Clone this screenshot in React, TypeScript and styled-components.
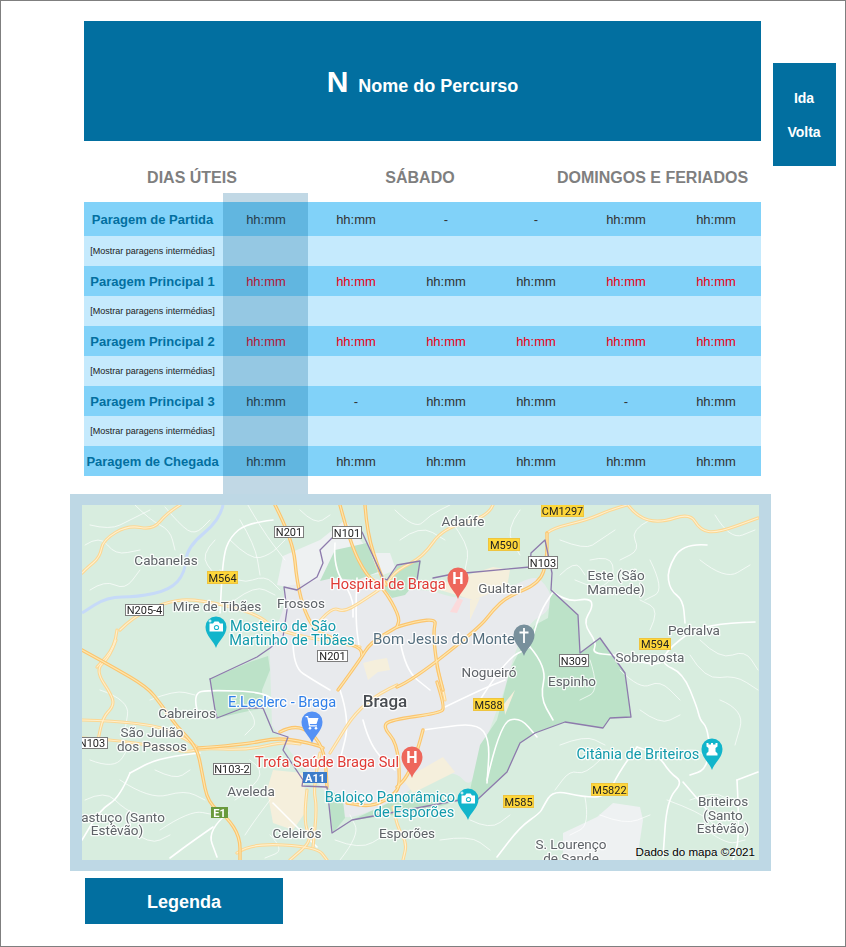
import React from "react";
import styled, { createGlobalStyle } from "styled-components";

const GlobalStyle = createGlobalStyle`
  html, body { margin: 0; padding: 0; background: #fff; }
  body { font-family: "Liberation Sans", Arial, sans-serif; }
`;

const Page = styled.div`
  position: relative;
  box-sizing: border-box;
  width: 846px;
  height: 947px;
  border: 1px solid #7f7f7f;
  padding: 20px 0 0 69px;
  overflow: hidden;
`;
const TopGrid = styled.div`
  display: grid;
  grid-template-columns: 677px 63px;
  grid-template-rows: 120px 61px auto;
  column-gap: 12px;
  margin-left: 14px;
`;
const TitleBar = styled.header`
  background: #026fa0;
  color: #fff;
  display: flex;
  align-items: center;
  justify-content: center;
  gap: 10px;
  font-weight: 700;
  padding: 2px 0 0;
`;
const RouteCode = styled.span`
  font-size: 30px;
  line-height: 34px;
`;
const RouteName = styled.span`
  font-size: 18px;
  line-height: 22px;
  margin-top: 7px;
`;
const DirectionBox = styled.nav`
  grid-column: 2;
  grid-row: 1 / span 3;
  align-self: start;
  margin-top: 42px;
  height: 103px;
  box-sizing: border-box;
  padding-top: 27px;
  padding-right: 1px;
  background: #026fa0;
  color: #fff;
  font-size: 14px;
  font-weight: 700;
  line-height: 16px;
  text-align: center;
  display: flex;
  flex-direction: column;
  gap: 18px;
`;
const DayHeads = styled.div`
  grid-column: 1;
  display: grid;
  grid-template-columns: 216px 240px 225px;
  padding-top: 28px;
  box-sizing: border-box;
`;
const DayHead = styled.h2`
  margin: 0;
  font-size: 16px;
  line-height: 18px;
  font-weight: 700;
  color: #7f7f7f;
  text-align: center;
  white-space: nowrap;
`;
const TimeTable = styled.div`
  grid-column: 1;
  display: flex;
  flex-direction: column;
`;
const MainRow = styled.div<{ $tall?: boolean }>`
  display: grid;
  grid-template-columns: 137px repeat(6, 90px);
  height: ${(p) => (p.$tall ? 34 : 30)}px;
  align-items: center;
  background: #81d2f9;
`;
const SubRow = styled.div`
  height: 30px;
  width: 677px;
  background: #c5eafd;
  display: grid;
  grid-template-columns: 137px 1fr;
  align-items: center;
`;
const StopName = styled.div`
  font-size: 13px;
  font-weight: 700;
  color: #026fa0;
  text-align: center;
  white-space: nowrap;
`;
const ShowStops = styled.div`
  font-size: 9px;
  color: #222;
  text-align: center;
  white-space: nowrap;
`;
const TimeCell = styled.div<{ $red?: boolean }>`
  font-size: 13px;
  color: ${(p) => (p.$red ? "#e80012" : "#333")};
  text-align: center;
`;
const ColumnHighlight = styled.div`
  position: absolute;
  left: 222px;
  top: 192px;
  width: 85px;
  height: 301px;
  background: rgba(0, 96, 149, 0.245);
  pointer-events: none;
`;
const MapFrame = styled.section`
  position: relative;
  box-sizing: border-box;
  width: 701px;
  height: 377px;
  margin-top: 18px;
  padding: 11px 12px;
  background: #bed8e5;
`;
const MapClip = styled.div`
  width: 677px;
  height: 355px;
  overflow: hidden;
`;
const MapSvg = styled.svg`
  display: block;
  width: 677px;
  height: 355px;
  background: #d8eddf;
  filter: blur(0.35px);
`;
const MapCredit = styled.span`
  position: absolute;
  right: 16px;
  bottom: 13px;
  font-size: 11.6px;
  line-height: 13px;
  color: #000;
  white-space: nowrap;
  text-shadow: 0 0 2px #fff;
`;
const LegendButton = styled.button`
  display: block;
  width: 198px;
  height: 46px;
  margin: 7px 0 0 15px;
  padding: 2px 0 0;
  border: 0;
  background: #026fa0;
  color: #fff;
  font-family: inherit;
  font-size: 18px;
  font-weight: 700;
  text-align: center;
`;

const toneColors: Record<string, string> = {
  place: "#5f6368",
  red: "#df3a35",
  teal: "#129aab",
  blue: "#2f7fe8",
  slate: "#56707f",
  city: "#494d52",
};
const toneSizes: Record<string, number> = {
  place: 13.5,
  red: 14.6,
  teal: 14.6,
  blue: 14.6,
  slate: 15,
  city: 17,
};
const Label = styled.text<{ $tone: string }>`
  font-family: Roboto, "Liberation Sans", sans-serif;
  font-size: ${(p) => toneSizes[p.$tone]}px;
  font-weight: ${(p) => (p.$tone === "city" ? 500 : 400)};
  fill: ${(p) => toneColors[p.$tone]};
  stroke: #fff;
  stroke-width: 2.6px;
  stroke-opacity: 0.85;
  paint-order: stroke;
  stroke-linejoin: round;
`;
const SignText = styled.text<{ $light?: boolean }>`
  font-family: Roboto, "Liberation Sans", sans-serif;
  font-size: 11px;
  font-weight: ${(p) => (p.$light ? 700 : 400)};
  fill: ${(p) => (p.$light ? "#fff" : "#222")};
  text-anchor: middle;
`;
const PinLetter = styled.text`
  font-family: Roboto, "Liberation Sans", sans-serif;
  font-size: 16px;
  font-weight: 700;
  fill: #fff;
  text-anchor: middle;
`;

type Pt = [number, number];

function smooth(pts: Pt[]): string {
  let d = `M${pts[0][0]} ${pts[0][1]}`;
  for (let i = 1; i < pts.length - 1; i++) {
    const mx = (pts[i][0] + pts[i + 1][0]) / 2;
    const my = (pts[i][1] + pts[i + 1][1]) / 2;
    d += ` Q${pts[i][0]} ${pts[i][1]} ${mx} ${my}`;
  }
  const last = pts[pts.length - 1];
  return d + ` L${last[0]} ${last[1]}`;
}
const poly = (pts: Pt[]) => pts.map((p) => p.join(",")).join(" ");

const city: Pt[] = [[270,660],[268,640],[285,610],[283,585],[300,585],[335,575],[345,570],[383,580],[400,590],[430,590],[460,600],[505,590],[535,575],[546,585],[552,598],[548,612],[530,622],[515,650],[505,690],[485,740],[472,790],[455,770],[425,780],[395,800],[350,820],[335,812],[325,790],[305,770],[285,745],[272,725]];
const paleGrey: Pt[][] = [
  [[277,585],[283,556],[320,540],[345,520],[385,572],[350,580],[300,590]],
  [[368,553],[390,553],[396,570],[380,576]],
  [[563,833],[597,817],[613,803],[640,807],[643,820],[637,860],[563,860]],
  [[543,630],[567,632],[570,638],[553,641]],
];
const forest: Pt[][] = [
  [[210,679],[250,662],[268,656],[270,670],[262,690],[263,708],[217,718],[215,710]],
  [[551,590],[578,615],[580,653],[600,638],[625,673],[631,717],[610,718],[603,728],[565,722],[535,733],[520,743],[507,772],[477,800],[470,790],[480,745],[497,720],[510,670],[525,640],[535,625],[548,618]],
  [[384,588],[397,566],[421,561],[418,580],[405,595],[392,598]],
  [[335,550],[367,543],[378,572],[357,580],[333,578],[320,581]],
  [[352,820],[410,793],[462,800],[420,812],[395,815]],
  [[327,787],[343,800],[345,818],[333,833]],
];
const beige: Pt[][] = [
  [[430,587],[493,567],[510,570],[507,587],[473,600],[450,593]],
  [[267,790],[273,770],[303,773],[307,810],[293,830],[273,823]],
  [[363,663],[375,660],[387,658],[390,670],[378,672],[368,680]],
  [[403,780],[443,757],[455,772],[413,793]],
  [[504,704],[515,690],[505,715]],
  [[470,600],[480,598],[470,620]],
];
const arterial: Pt[][] = [
  [[340,505],[350,543],[367,577],[383,587],[400,617],[397,627]],
  [[275,505],[293,540],[297,583],[305,613],[317,633],[360,647],[362,655]],
  [[365,505],[367,533],[380,573],[386,585]],
  [[397,627],[437,615],[433,633],[437,667],[443,690]],
  [[338,690],[360,660],[370,643],[397,627]],
  [[397,687],[413,680],[480,627],[493,610],[507,597],[540,583],[547,560],[547,533]],
  [[198,748],[243,745],[280,737],[317,745],[323,748]],
  [[280,732],[293,725],[313,733],[325,753],[327,787]],
  [[82,650],[113,667],[147,687],[160,703],[177,727],[197,747],[202,773],[208,803],[227,817],[240,837],[240,860]],
  [[437,682],[445,707],[440,713],[390,720],[383,727],[397,743],[400,780],[397,793],[373,807],[347,803]],
  [[423,730],[417,753],[407,777],[397,787]],
];
const minorRoads: Pt[][] = [
  [[547,533],[553,528],[587,520],[610,510],[627,505]],
  [[628,505],[637,517],[660,523],[690,513],[700,530],[717,533],[758,518]],
  [[493,505],[488,517],[443,528],[423,557],[397,570],[387,583]],
  [[180,505],[167,513],[153,530],[128,525],[103,540],[100,557],[87,568],[82,573]],
  [[120,630],[133,617],[163,603],[193,598],[257,613],[277,632],[360,647]],
  [[117,630],[115,647],[97,667]],
  [[383,587],[360,603],[343,612],[333,607],[313,628]],
  [[116,640],[110,657],[95,670],[113,697],[113,707],[103,717],[98,740]],
  [[82,720],[147,722],[183,737],[197,747]],
  [[82,738],[123,740],[187,753],[200,748],[247,750],[283,742],[300,744]],
  [[237,853],[250,843],[317,847],[327,860]],
  [[307,790],[303,823],[313,840],[290,860]],
  [[320,753],[313,787],[317,807],[313,847]],
  [[397,685],[363,700],[330,753]],
  [[393,807],[397,827],[407,843],[403,860]],
  [[437,667],[443,690],[445,700]],
];
const whiteRoads: Pt[][] = [
  [[273,520],[247,523],[230,537],[223,557],[220,613]],
  [[755,622],[703,623],[670,647],[660,663],[683,673],[697,707],[700,720],[707,727],[710,750],[705,770],[690,775]],
  [[707,545],[683,543],[667,570],[670,590],[683,600],[685,623]],
  [[553,592],[567,602],[590,598],[593,607],[583,623],[597,643],[592,653],[613,655]],
  [[613,655],[650,665],[660,663]],
  [[637,747],[620,770],[607,797],[583,797],[553,790],[543,807],[540,813],[520,827],[497,857]],
  [[637,747],[657,753],[670,773],[683,782],[667,800],[663,857]],
  [[683,782],[707,810]],
  [[737,780],[758,772]],
  [[737,780],[740,837],[733,860]],
  [[423,730],[437,728],[477,723],[490,740],[487,783]],
  [[363,720],[370,747],[395,770]],
  [[357,578],[355,617],[360,653]],
  [[293,640],[293,667],[313,680],[330,690]],
  [[335,543],[333,567],[353,597],[353,617]],
  [[530,647],[547,667],[540,697],[553,720]],
  [[487,780],[500,723],[520,717],[537,737]],
  [[130,773],[120,797],[100,810],[82,840]],
  [[200,753],[160,757],[130,773]],
  [[213,827],[190,843],[170,858]],
  [[228,813],[207,830],[217,857]],
  [[197,710],[193,693],[210,690],[263,692],[277,703]],
  [[273,803],[300,830],[317,847]],
  [[516,640],[530,647],[540,612],[553,592]],
  [[340,690],[350,720],[340,760]],
  [[400,640],[405,670],[430,690]],
  [[445,707],[480,690],[505,680]],
  [[480,700],[505,660],[530,647]],
];
const thinRoads: Pt[][] = [
  [[90,525],[110,530],[130,520],[150,510]],
  [[135,505],[150,520],[170,530],[175,550]],
  [[230,540],[250,560],[270,555],[285,540]],
  [[220,570],[240,585],[265,575],[280,590]],
  [[240,520],[255,545],[260,575]],
  [[90,590],[105,580],[125,590],[140,570]],
  [[590,560],[610,555],[615,575],[600,590],[575,580]],
  [[650,520],[630,530],[640,550],[620,560]],
  [[700,640],[720,660],[745,650],[758,670]],
  [[650,630],[660,610],[640,600]],
  [[600,760],[585,775],[570,770],[555,790]],
  [[585,797],[590,825],[570,835]],
  [[660,760],[690,745],[710,760]],
  [[667,800],[700,812],[720,830]],
  [[150,700],[175,690],[195,695]],
  [[120,780],[150,800],[185,790],[205,800]],
  [[160,830],[190,810],[215,815]],
  [[100,690],[130,700],[125,730]],
  [[250,760],[265,770],[250,790],[235,800]],
  [[270,800],[255,820],[245,835]],
  [[470,820],[490,830],[510,815]],
  [[620,670],[640,690],[660,680],[680,700]],
  [[590,660],[600,690],[580,700]],
  [[440,840],[470,835],[490,850]],
  [[450,520],[470,545],[465,570]],
  [[520,510],[505,530],[520,555]],
  [[85,545],[100,535],[115,555],[140,550]],
  [[165,507],[180,525],[195,535],[210,520]],
  [[245,500],[262,530],[285,560]],
  [[215,540],[200,555],[215,575]],
  [[235,600],[255,585],[275,595]],
  [[300,510],[315,525],[330,515]],
  [[395,510],[415,530],[430,515],[450,505]],
  [[400,540],[420,525],[445,540]],
  [[560,540],[585,550],[600,540],[615,530]],
  [[560,575],[575,560],[585,575]],
  [[650,560],[665,590],[645,600]],
  [[700,560],[725,580],[750,565]],
  [[715,515],[730,540],[755,530]],
  [[690,655],[705,680],[735,675],[758,690]],
  [[720,700],[745,710],[735,745]],
  [[560,745],[585,735],[605,745]],
  [[640,710],[660,725],[680,715]],
  [[600,815],[625,825],[650,815]],
  [[690,800],[715,790],[735,805]],
  [[700,825],[725,845],[745,840]],
  [[90,760],[115,770],[130,745]],
  [[85,800],[105,790],[125,810],[150,820]],
  [[155,770],[175,780],[190,770]],
  [[130,830],[150,845],[170,835]],
  [[240,700],[260,720],[245,735]],
  [[270,835],[285,850],[265,858]],
  [[335,840],[360,850],[385,835]],
  [[340,860],[360,835],[350,815]],
];
const border: Pt[] = [[210,679],[257,657],[270,648],[283,637],[287,610],[284,587],[297,590],[317,577],[323,563],[320,550],[332,538],[362,532],[383,578],[387,580],[397,565],[420,561],[417,580]];
const border2: Pt[] = [[433,578],[448,575],[465,573],[530,567],[531,553],[545,540],[552,573],[551,590],[578,615],[580,653],[600,638],[625,673],[631,717],[610,718],[603,728],[565,722],[535,733],[520,743],[507,772],[477,800],[460,800],[352,820],[332,833],[327,787],[302,786],[303,780],[283,750],[288,737],[273,732],[263,708],[243,708],[217,718],[215,710],[210,679]];

const whiteSigns: [string, number, number, number, number][] = [
  ["N201", 274, 526, 29, 11],
  ["N101", 332, 526, 29, 12],
  ["N205-4", 125, 604, 38, 11],
  ["N201", 317, 650, 30, 11],
  ["N103", 528, 556, 29, 12],
  ["N309", 559, 654, 29, 12],
  ["N103", 76, 737, 31, 11],
  ["N103-2", 213, 763, 37, 11],
];
const yellowSigns: [string, number, number, number, number][] = [
  ["M564", 207, 571, 30, 12],
  ["CM1297", 541, 504, 42, 12],
  ["M590", 488, 538, 31, 12],
  ["M594", 639, 638, 31, 11],
  ["M588", 473, 698, 30, 12],
  ["M585", 503, 795, 30, 12],
  ["M5822", 591, 783, 36, 12],
];
const labels: [string, number, number, string][] = [
  ["Cabanelas", 166, 565, "place"],
  ["Mire de Tibães", 217, 611, "place"],
  ["Frossos", 301, 608, "place"],
  ["Adaúfe", 463, 526, "place"],
  ["Gualtar", 500, 593, "place"],
  ["Este (São", 616, 580, "place"],
  ["Mamede)", 616, 594, "place"],
  ["Pedralva", 694, 635, "place"],
  ["Sobreposta", 650, 662, "place"],
  ["Espinho", 572, 686, "place"],
  ["Nogueiró", 489, 677, "place"],
  ["Bom Jesus do Monte", 444, 644, "slate"],
  ["Cabreiros", 187, 718, "place"],
  ["São Julião", 152, 737, "place"],
  ["dos Passos", 152, 751, "place"],
  ["Aveleda", 251, 796, "place"],
  ["Celeirós", 297, 838, "place"],
  ["Esporões", 407, 838, "place"],
  ["astuço (Santo", 123, 822, "place"],
  ["Estêvão)", 117, 835, "place"],
  ["S. Lourenço", 571, 849, "place"],
  ["de Sande", 571, 863, "place"],
  ["Briteiros", 723, 806, "place"],
  ["(Santo", 723, 820, "place"],
  ["Estêvão)", 723, 833, "place"],
  ["Citânia de Briteiros", 638, 759, "teal"],
  ["Baloiço Panorâmico", 390, 802, "teal"],
  ["de Esporões", 414, 817, "teal"],
  ["Mosteiro de São", 283, 631, "teal"],
  ["Martinho de Tibães", 292, 645, "teal"],
  ["Hospital de Braga", 388, 589, "red"],
  ["Trofa Saúde Braga Sul", 327, 767, "red"],
  ["E.Leclerc - Braga", 282, 707, "blue"],
  ["Braga", 385, 707, "city"],
];

const Pin = ({ x, y, fill, children }: { x: number; y: number; fill: string; children?: React.ReactNode }) => (
  <g transform={`translate(${x} ${y})`}>
    <path
      fill={fill}
      d="M0 21C-2 14-10.5 9-10.5 0A10.5 10.5 0 1 1 10.5 0C10.5 9 2 14 0 21Z"
    />
    {children}
  </g>
);
const CameraGlyph = () => (
  <g fill="#fff">
    <path d="M-6.5-3.5H-3L-1.5-5.5H2.5L4-3.5H7V4.5H-6.5Z" />
    <circle cx="0.5" cy="0.5" r="2.6" fill="#12b5cb" />
    <circle cx="0.5" cy="0.5" r="1.6" />
    <path d="M-6-7.5V-4.5M-7.5-6H-4.5" stroke="#fff" strokeWidth="1" />
  </g>
);

const StationMap = () => (
  <MapSvg viewBox="82 505 677 355" role="img" aria-label="Mapa de Braga">
    {paleGrey.map((p, i) => (
      <polygon key={i} points={poly(p)} fill="#eef1f2" />
    ))}
    <path d={smooth(city) + "Z"} fill="#e8eaed" />
    {forest.map((p, i) => (
      <polygon key={i} points={poly(p)} fill="#bce2c8" />
    ))}
    {beige.map((p, i) => (
      <polygon key={i} points={poly(p)} fill="#f5efdc" />
    ))}
    <polygon points="450,612 458,598 463,600 457,613" fill="#fbdadb" />
    <path
      d={smooth([[223,505],[220,520],[187,547],[185,573],[170,590],[137,597],[107,597],[82,613]])}
      fill="none"
      stroke="#c6daf8"
      strokeWidth="3"
    />
    <g fill="none" strokeLinecap="round" strokeLinejoin="round">
      {thinRoads.map((p, i) => (
        <path key={i} d={smooth(p)} stroke="#fff" strokeWidth="0.8" opacity="0.85" />
      ))}
      {whiteRoads.map((p, i) => (
        <path key={i} d={smooth(p)} stroke="#fff" strokeWidth="1.6" />
      ))}
      {minorRoads.map((p, i) => (
        <path key={i} d={smooth(p)} stroke="#fcd793" strokeWidth="3.2" />
      ))}
      {minorRoads.map((p, i) => (
        <path key={i} d={smooth(p)} stroke="#fff0cd" strokeWidth="1.1" />
      ))}
      {arterial.map((p, i) => (
        <path key={i} d={smooth(p)} stroke="#fbc56f" strokeWidth="3.4" />
      ))}
      {arterial.map((p, i) => (
        <path key={i} d={smooth(p)} stroke="#fee6ad" strokeWidth="1.2" />
      ))}
      <polyline points={poly(border)} stroke="#8d7aac" strokeWidth="1.3" />
      <polyline points={poly(border2)} stroke="#8d7aac" strokeWidth="1.3" />
    </g>
    {whiteSigns.map(([t, x, y, w, h], i) => (
      <g key={i}>
        <rect x={x + 0.5} y={y + 0.5} width={w} height={h} fill="#fff" stroke="#7d7d7d" />
        <SignText x={x + w / 2 + 0.5} y={y + h - 1.5}>{t}</SignText>
      </g>
    ))}
    {yellowSigns.map(([t, x, y, w, h], i) => (
      <g key={i}>
        <rect x={x + 0.5} y={y + 0.5} width={w} height={h} fill="#fed73a" stroke="#eec440" />
        <SignText x={x + w / 2 + 0.5} y={y + h - 1.5}>{t}</SignText>
      </g>
    ))}
    <rect x="303" y="772" width="24" height="11" fill="#3d7cc9" />
    <SignText $light x="315" y="781.5">A11</SignText>
    <rect x="211" y="807" width="17" height="11" fill="#6a9a3d" />
    <SignText $light x="219.5" y="816.5">E1</SignText>
    {labels.map(([t, x, y, tone], i) => (
      <Label key={i} x={x} y={y} textAnchor="middle" $tone={tone}>{t}</Label>
    ))}
    <Pin x={458} y={578} fill="#ee675c"><PinLetter y="5.5">H</PinLetter></Pin>
    <Pin x={412} y={757} fill="#ee675c"><PinLetter y="5.5">H</PinLetter></Pin>
    <Pin x={216} y={627} fill="#12b5cb"><CameraGlyph /></Pin>
    <Pin x={468} y={799} fill="#12b5cb"><CameraGlyph /></Pin>
    <Pin x={712} y={749} fill="#12b5cb">
      <path fill="#fff" d="M-5.5-6H-3.5V-4.5H-1V-6H1V-4.5H3.5V-6H5.5V-2.5L3.5-1V2.5L5.5 4.5V6.5H-5.5V4.5L-3.5 2.5V-1L-5.5-2.5Z" />
    </Pin>
    <Pin x={524} y={635} fill="#78909c">
      <path stroke="#fff" strokeWidth="1.8" d="M0-7V8M-4.5-2.5H4.5" />
    </Pin>
    <Pin x={312} y={722} fill="#5491f5">
      <path fill="#fff" d="M-6.5-6H-4L-3.3-4H6.5L4.5 2H-2.3L-1.8 3.3H5V4.6H-3L-4.8-4.8H-6.5Z" />
      <circle cx="-2" cy="6.3" r="1.3" fill="#fff" />
      <circle cx="4" cy="6.3" r="1.3" fill="#fff" />
    </Pin>
  </MapSvg>
);

type Time = { text?: string; red?: boolean };
const T: Time = { text: "hh:mm" };
const R: Time = { text: "hh:mm", red: true };
const D: Time = { text: "-" };

const rows: { name: string; times: Time[] }[] = [
  { name: "Paragem de Partida", times: [T, T, D, D, T, T] },
  { name: "Paragem Principal 1", times: [R, R, T, T, R, R] },
  { name: "Paragem Principal 2", times: [R, R, R, R, R, R] },
  { name: "Paragem Principal 3", times: [T, D, T, T, D, T] },
  { name: "Paragem de Chegada", times: [T, T, T, T, T, T] },
];

export default function App() {
  return (
    <>
      <GlobalStyle />
      <Page>
        <TopGrid>
          <TitleBar>
            <RouteCode>N</RouteCode>
            <RouteName>Nome do Percurso</RouteName>
          </TitleBar>
          <DirectionBox>
            <span>Ida</span>
            <span>Volta</span>
          </DirectionBox>
          <DayHeads>
            <DayHead>DIAS ÚTEIS</DayHead>
            <DayHead>SÁBADO</DayHead>
            <DayHead>DOMINGOS E FERIADOS</DayHead>
          </DayHeads>
          <TimeTable>
            {rows.map((row, i) => (
              <React.Fragment key={row.name}>
                <MainRow $tall={i === 0}>
                  <StopName>{row.name}</StopName>
                  {row.times.map((t, j) => (
                    <TimeCell key={j} $red={t.red}>{t.text}</TimeCell>
                  ))}
                </MainRow>
                {i < rows.length - 1 && (
                  <SubRow>
                    <ShowStops>[Mostrar paragens intermédias]</ShowStops>
                  </SubRow>
                )}
              </React.Fragment>
            ))}
          </TimeTable>
        </TopGrid>
        <MapFrame>
          <MapClip>
            <StationMap />
          </MapClip>
          <MapCredit>Dados do mapa ©2021</MapCredit>
        </MapFrame>
        <LegendButton>Legenda</LegendButton>
        <ColumnHighlight />
      </Page>
    </>
  );
}
